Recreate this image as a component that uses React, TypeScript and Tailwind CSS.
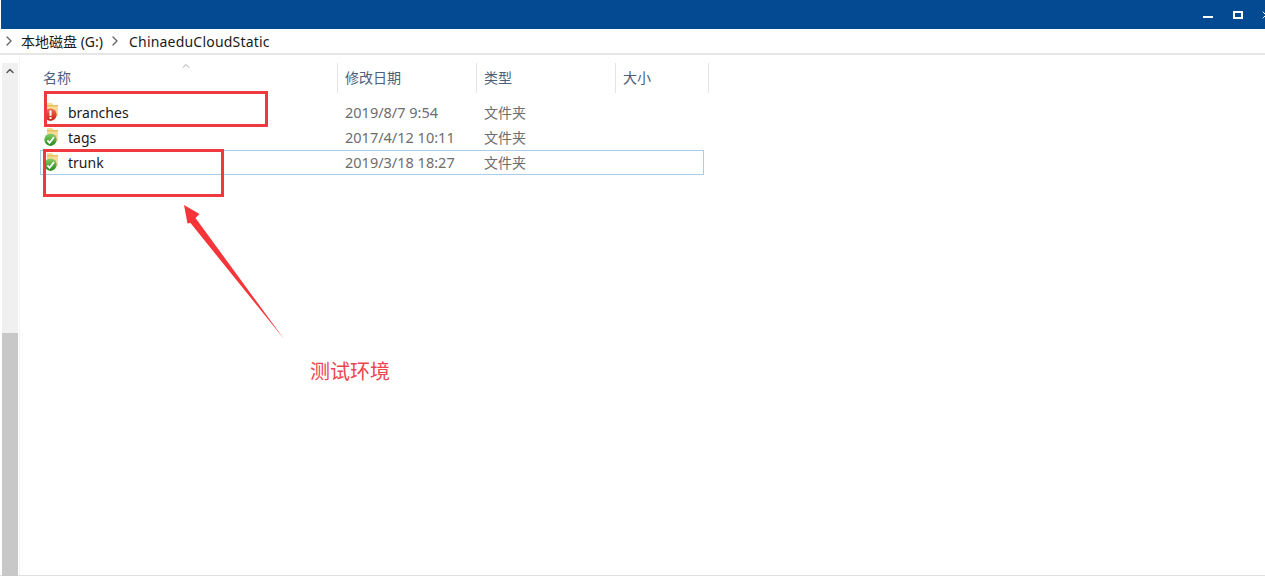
import { ChevronRight, ChevronUp, X } from "lucide-react"

const font = "font-['Noto_Sans','Noto_Sans_CJK_SC',sans-serif]"

const rows = [
  { name: "branches", date: "2019/8/7 9:54", status: "error" },
  { name: "tags", date: "2017/4/12 10:11", status: "ok" },
  { name: "trunk", date: "2019/3/18 18:27", status: "ok", selected: true },
]

function FolderIcon({ status }: { status: string }) {
  const id = `badge-${status}`
  return (
    <svg width="18" height="21" viewBox="0 0 18 21" className="shrink-0">
      <defs>
        <linearGradient id={id} x1="0" y1="0" x2="0" y2="1">
          <stop offset="0" stopColor={status === "error" ? "#f0705a" : "#8ccf6a"} />
          <stop offset="1" stopColor={status === "error" ? "#c81e12" : "#1f8a18"} />
        </linearGradient>
      </defs>
      <path d="M4 1h5l1.5 2H15v11H4z" fill="#f6dc94" />
      <path d="M4 3h11v1.5H4z" fill="#e6bf62" />
      <circle cx="7.5" cy="12.7" r="6.2" fill={`url(#${id})`} />
      {status === "error" ? (
        <>
          <rect x="6.5" y="8.4" width="2" height="5.4" fill="#fff" />
          <rect x="6.5" y="15" width="2" height="2" fill="#fff" />
        </>
      ) : (
        <path d="M4.4 13.4l2.2 2.4L11 10" fill="none" stroke="#fff" strokeWidth="1.8" />
      )}
    </svg>
  )
}

function HeaderCell({ label, width }: { label: string; width: string }) {
  return (
    <div className={`${width} h-[30px] flex items-center pl-[7px] pb-px border-r border-[#e5e5e5] text-[14px] text-[#4c607a]`}>
      {label}
    </div>
  )
}

export default function App() {
  return (
    <div className={`${font} relative w-[1265px] h-[576px] overflow-hidden bg-white`}>
      {/* title bar */}
      <div className="ml-px h-[29px] bg-[#034a92] flex items-center justify-end">
        <div className="w-[10px] h-[2px] bg-white mr-[20px] mt-[5px]" />
        <div className="w-[10px] h-[8px] border-2 border-white mr-[17px]" />
        <X size={12} strokeWidth={2} className="text-white -mr-[7px]" />
      </div>

      {/* address bar */}
      <div className="h-[24px] flex items-center text-[14px] text-[#1a1a1a] pl-px">
        <ChevronRight size={16} className="text-[#666] mr-[4px]" />
        <span>本地磁盘 (G:)</span>
        <ChevronRight size={16} className="text-[#666] ml-[4px] mr-[6px]" />
        <span className="tracking-[0.2px]">ChinaeduCloudStatic</span>
      </div>
      <div className="h-[2px] bg-[#e6e6e6]" />

      <div className="flex h-[521px] border-b border-[#e0e0e0]">
        {/* scrollbar */}
        <div className="w-[20px] pt-[8px] pl-[2px] border-r border-[#f5f5f5]">
          <div className="w-[16px] h-[513px] bg-[#f0f0f0] flex flex-col">
            <div className="h-[270px] flex justify-center pt-[2px]">
              <ChevronUp size={12} strokeWidth={3} className="text-[#555]" />
            </div>
            <div className="flex-1 bg-[#c8c8c8]" />
          </div>
        </div>

        {/* file list */}
        <div className="flex-1 pt-[8px] relative">
          <div className="flex">
            <div className="relative w-[318px] h-[30px] flex items-center pl-[23px] pb-px border-r border-[#e5e5e5] text-[14px] text-[#4c607a]">
              名称
              <ChevronUp size={12} strokeWidth={1.5} className="absolute left-[160px] -top-[3px] text-[#888]" />
            </div>
            <HeaderCell label="修改日期" width="w-[139px]" />
            <HeaderCell label="类型" width="w-[139px]" />
            <HeaderCell label="大小" width="w-[93px]" />
          </div>
          <div className="pt-[7px] ml-[20px] w-[664px]">
            {rows.map((row) => (
              <div
                key={row.name}
                className={`h-[25px] flex items-center border ${row.selected ? "border-[#a9cde8]" : "border-transparent"}`}
              >
                <div className="w-[27px] pl-[2px] flex items-center"><FolderIcon status={row.status} /></div>
                <div className="w-[277px] text-[14px] text-[#1a1a1a]">{row.name}</div>
                <div className="w-[139px] text-[14.5px] text-[#6d6d6d]">{row.date}</div>
                <div className="text-[14px] text-[#6d6d6d]">文件夹</div>
              </div>
            ))}
          </div>
        </div>
      </div>

      {/* annotations */}
      <div className="absolute left-[44px] top-[91px] w-[224px] h-[36px] border-[3px] border-[#ee3a3f]" />
      <div className="absolute left-[43px] top-[149px] w-[181px] h-[48px] border-[3px] border-[#ee3a3f]" />
      <svg className="absolute left-[170px] top-[190px]" width="130" height="160" viewBox="0 0 130 160">
        <path d="M14 15L29.5 24L25.5 28L114 149L20.5 33L17.5 33.5Z" fill="#f5353a" />
      </svg>
      <div className="absolute left-[310px] top-[359px] text-[20px] leading-[26px] text-[#ee4450]">测试环境</div>
    </div>
  )
}
